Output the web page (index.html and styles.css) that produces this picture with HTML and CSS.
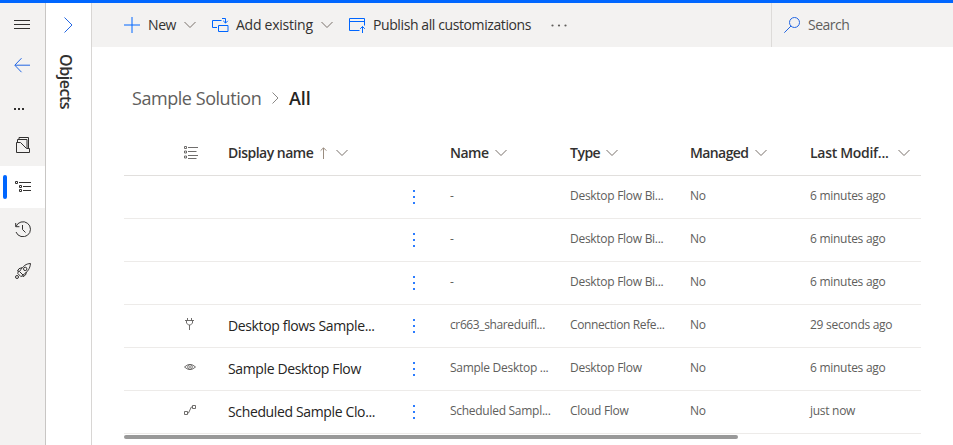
FILE: index.html
```html
<!DOCTYPE html>
<html lang="en">
<head>
<meta charset="utf-8">
<title>Sample Solution</title>
<link rel="stylesheet" href="styles.css">
</head>
<body>
<svg class="defs" aria-hidden="true">
  <symbol id="down" viewBox="0 0 12 8"><path d="M.5 1 6 6.5 11.5 1"/></symbol>
  <symbol id="more" viewBox="0 0 2 14"><path d="M0 0h2v2H0zM0 6h2v2H0zM0 12h2v2H0z"/></symbol>
</svg>
<div class="app">
  <nav class="rail">
    <a class="item"><svg class="i16" viewBox="0 0 16 16"><path d="M0 4.500h16M0 8.500h16M0 12.500h16"/></svg></a>
    <a class="item back"><svg class="i16" viewBox="0 0 16 16"><path d="M16 8.2H1M7.5 1.2.8 8.2l6.7 7"/></svg></a>
    <a class="item dots"><svg class="dots-icon" viewBox="0 0 10 2"><path d="M0 0h2v2H0zM4 0h2v2H4zM8 0h2v2H8z"/></svg></a>
    <a class="item"><svg class="i16" viewBox="0 0 16 16"><path d="M1.500 5.500V15.500h13v-4h-3L5.500 5.500zM2.500 5.500v-3h9.500v8.500M4 2.500V.5h9.500v11"/></svg></a>
    <a class="item active"><svg class="i16" viewBox="0 0 16 16"><path d="M4 3.500h12M8 7.500h8M8 11.500h8"/><path class="box" d="M.5 2.500h2v2h-2zM4.500 6.500h2v2h-2zM4.500 10.500h2v2h-2z"/></svg></a>
    <a class="item"><svg class="i16" viewBox="0 0 16 16"><path d="M.7 2v3.700h3.700M1 5.500A7.500 7.500 0 1 1 1 11M7.500 4v4.500l3 3"/></svg></a>
    <a class="item"><svg class="i16" viewBox="0 0 16 16"><path d="M15.500.5C11 .8 8.500 2.500 4.500 8.500l3.500 3.500c5-3.500 7-6.500 7.500-11.500zM7 4.700 4 5.700 2.500 8l2 .5M11.500 9l-1 3L8 13.700 8 12M3.300 8.300 2.800 10.500l3 3 2-.8"/><circle cx="10.200" cy="5.900" r="1.700"/><circle cx="2" cy="14" r="1.500"/></svg></a>
  </nav>
  <aside class="objects">
    <svg class="expand" viewBox="0 0 9 16"><path d="M.5.5 8 8 .5 15.500"/></svg>
    <span class="objects-label">Objects</span>
  </aside>
  <main>
    <header class="bar">
      <button class="cmd new"><svg class="i16" viewBox="0 0 16 16"><path d="M8 0v16M0 8h16"/></svg><span>New</span><svg class="down"><use href="#down"/></svg></button>
      <button class="cmd add"><svg class="add-icon" viewBox="0 0 17 16"><path d="M5 10.500H.5v-7h9M6.500 8.500h9.500v6h-9.500zM13.500 6V1.500H10M11.200 3.800l2.300 2.300 2.300-2.300"/></svg><span>Add existing</span><svg class="down"><use href="#down"/></svg></button>
      <button class="cmd pub"><svg class="i16" viewBox="0 0 16 16"><path d="M10.500 13.500H.5v-12h15v7M.5 4.500h15M13.500 16V9.500M11.200 11.800l2.300-2.300 2.300 2.300"/></svg><span>Publish all customizations</span></button>
      <svg class="overflow" viewBox="0 0 16 3"><circle cx="1.500" cy="1.500" r="1.100"/><circle cx="8" cy="1.500" r="1.100"/><circle cx="14.500" cy="1.500" r="1.100"/></svg>
      <div class="search"><svg class="i16" viewBox="0 0 16 16"><circle cx="10.500" cy="5.500" r="5"/><path d="M7 9 .3 15.700"/></svg><span>Search</span></div>
    </header>
    <div class="crumbs"><span class="solution">Sample Solution</span><svg class="crumb-arrow" viewBox="0 0 7 12"><path d="M.5.5 6 6 .5 11.500"/></svg><strong>All</strong></div>
    <section class="grid">
      <div class="row head">
        <svg class="kind list" viewBox="0 0 14 14"><path d="M4 1.500h10M4 5.500h8.500M4 9.500h10M4 12.500h8.500"/><path class="box" d="M.5.5h2v2h-2zM.5 5h2v2h-2zM.5 10h2v2h-2z"/></svg>
        <div class="cell"><span class="h-display">Display name</span><svg class="sort" viewBox="0 0 7 12"><path d="M3.500 12V1M.6 3.700 3.500.8l2.900 2.900"/></svg><svg class="down"><use href="#down"/></svg></div>
        <span></span>
        <div class="cell"><span class="h-name">Name</span><svg class="down"><use href="#down"/></svg></div>
        <div class="cell"><span class="h-type">Type</span><svg class="down"><use href="#down"/></svg></div>
        <div class="cell"><span class="h-managed">Managed</span><svg class="down"><use href="#down"/></svg></div>
        <div class="cell"><span class="h-modified">Last Modif...</span><svg class="down last"><use href="#down"/></svg></div>
      </div>
      <div class="row"><span></span><span></span><svg class="more"><use href="#more"/></svg><span>-</span><span>Desktop Flow Bi...</span><span>No</span><span>6 minutes ago</span></div>
      <div class="row"><span></span><span></span><svg class="more"><use href="#more"/></svg><span>-</span><span>Desktop Flow Bi...</span><span>No</span><span>6 minutes ago</span></div>
      <div class="row"><span></span><span></span><svg class="more"><use href="#more"/></svg><span>-</span><span>Desktop Flow Bi...</span><span>No</span><span>6 minutes ago</span></div>
      <div class="row">
        <svg class="kind" viewBox="0 0 12 12"><path d="M3.500 0v2.500M7.500 0v2.500M1 2.500h9M2.500 2.500V5l2 2h2l2-2V2.500M5.500 7V12"/></svg>
        <span class="title">Desktop flows Sample...</span><svg class="more"><use href="#more"/></svg><span class="tight">cr663_shareduifl...</span><span class="tight">Connection Refe...</span><span>No</span><span>29 seconds ago</span></div>
      <div class="row">
        <svg class="kind" viewBox="0 0 12 12"><path d="M.5 6Q6 .8 11.500 6 6 11.200.5 6z"/><circle cx="6" cy="6" r="2.300"/><circle cx="6" cy="6" r=".5"/></svg>
        <span class="title">Sample Desktop Flow</span><svg class="more"><use href="#more"/></svg><span>Sample Desktop ...</span><span>Desktop Flow</span><span>No</span><span>6 minutes ago</span></div>
      <div class="row">
        <svg class="kind" viewBox="0 0 12 12"><path d="M.5 7.500h3v3h-3zM8.500 1.500h3v3h-3zM3.500 9h1L7.300 3h1.200"/></svg>
        <span class="title">Scheduled Sample Clo...</span><svg class="more"><use href="#more"/></svg><span>Scheduled Sampl...</span><span>Cloud Flow</span><span>No</span><span>just now</span></div>
      <div class="scroll"></div>
    </section>
  </main>
</div>
</body>
</html>
```
FILE: styles.css
```css
* { box-sizing: border-box; }
body { margin: 0; height: 445px; overflow: hidden; background: #fff; color: #323130; font: 14px/20px "Open Sans", "Noto Sans", sans-serif; }
svg { display: block; flex: none; fill: none; stroke: currentColor; stroke-width: 1; }
.defs { display: none; }
.app { display: flex; height: 445px; border-top: 3px solid #0066ff; }
.i16 { width: 16px; height: 16px; }

.rail { width: 46px; background: #f3f2f1; border-right: 1px solid #c8c6c4; color: #323130; }
.item { display: flex; align-items: center; height: 42px; padding-left: 14px; }
.item .i16 { margin-left: 1px; }
.item:first-child .i16, .item.back .i16 { margin-left: 0; }
.item.back { color: #2266e3; height: 40px; }
.item.dots { height: 39px; padding-top: 9px; }
.item.active { background: #fff; padding-left: 3px; }
.item.active::before { content: ""; width: 4px; height: 24px; margin-right: 7px; border-radius: 2px; background: #0066ff; }
.dots-icon { width: 10px; height: 2px; fill: #323130; stroke: none; }

.objects { width: 46px; border-right: 1px solid #d8d6d4; display: flex; flex-direction: column; align-items: center; padding-top: 14px; }
.expand { width: 9px; height: 16px; color: #2266e3; }
.objects-label { writing-mode: vertical-rl; font-size: 16px; font-weight: 600; line-height: 22px; margin: 21px 5px 0 0; letter-spacing: -.45px; }

main { flex: 1; min-width: 0; }
.bar { display: flex; height: 44px; background: #f3f2f1; padding-left: 32px; align-items: center; }
.cmd { display: flex; align-items: center; padding: 0; border: 0; background: none; font: inherit; color: #323130; }
.cmd svg { color: #0066ff; }
.cmd span { margin-left: 8px; white-space: nowrap; letter-spacing: -.4px; }
.down { width: 12px; height: 8px; }
.cmd .down { margin-left: 8px; color: #78716b; }
.new { width: 88px; }
.add { width: 137px; }
.cmd.add span { margin-left: 7px; letter-spacing: -.25px; }
.pub { width: 202px; }
.add-icon { width: 17px; height: 16px; }
.overflow { width: 16px; height: 3px; fill: #605e5c; stroke: none; }
.search { display: flex; align-items: center; gap: 8px; width: 182px; height: 44px; margin-left: auto; padding-left: 12px; border-left: 1px solid #dddbd9; color: #605e5c; letter-spacing: -.5px; }
.search svg { color: #2266e3; }

.crumbs { display: flex; align-items: center; height: 24px; margin: 39px 0 0 40px; font-size: 18px; color: #605e5c; }
.crumb-arrow { width: 7px; height: 12px; margin: 0 10px 0 11px; color: #8a8886; }
.crumbs strong { font-weight: 600; color: #252423; letter-spacing: -.1px; }
.solution { width: 129px; white-space: nowrap; letter-spacing: -.45px; }

.grid { width: 797px; margin: 21px 0 0 32px; }
.row { display: grid; grid-template-columns: 104px 184px 38px 120px 120px 120px 111px; align-items: center; height: 43px; border-bottom: 1px solid #edebe9; font-size: 12px; color: #605e5c; padding-bottom: 1px; }
.row > span { margin-top: -2px; white-space: nowrap; letter-spacing: -.28px; }
.row > .tight { letter-spacing: -.38px; }
.row > .title { font-size: 14px; color: #252423; padding-top: 2px; letter-spacing: -.36px; }
.kind { width: 12px; height: 12px; margin: -4px 0 0 60px; color: #605e5c; stroke-width: .9; }
.more { width: 2px; height: 14px; margin: 1px 0 0 1px; fill: #2b7cff; stroke: none; }
.head { height: 45px; font-size: 14px; font-weight: 600; color: #323130; border-color: #e1dfdd; }
.head .kind { width: 14px; height: 14px; margin-top: 0; }
.cell { display: flex; align-items: center; white-space: nowrap; letter-spacing: -.5px; }
.cell .down { margin-left: 6px; color: #78716b; }
.sort { width: 7px; height: 12px; margin-left: 7px; color: #9a8d80; }
.h-display + .sort + .down { margin-left: 9px; }
.h-managed { letter-spacing: -.6px; }
.h-managed + .down { margin-left: 7px; }
.h-modified { letter-spacing: -.3px; }
.cell .last { margin-left: 10px; }
.scroll { width: 614px; height: 4px; margin-top: 1px; border-radius: 2px; background: #999; }
```
